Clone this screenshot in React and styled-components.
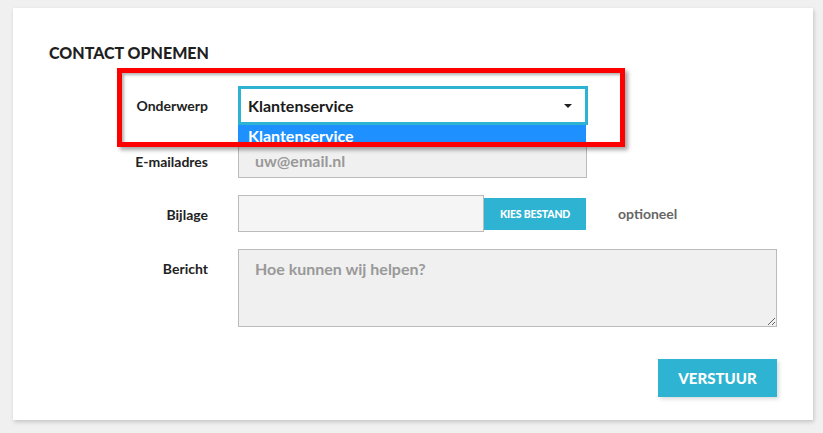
import React from "react";
import styled, { createGlobalStyle } from "styled-components";

const GlobalStyle = createGlobalStyle`
  * {
    box-sizing: border-box;
  }

  body {
    margin: 0;
    background: #f0f0f0;
    font-family: Lato, "Open Sans", sans-serif;
    color: #222;
  }
`;

const Page = styled.div`
  padding: 8px 10px 12px 13px;
`;

const Card = styled.section`
  position: relative;
  width: 800px;
  background: #ffffff;
  box-shadow: 1px 2px 4px rgba(0, 0, 0, 0.18);
  padding: 34px 36px 23px 36px;
`;

const Title = styled.h2`
  margin: 0 0 22px 0;
  font-size: 16px;
  line-height: 22px;
  font-weight: 900;
  color: #1f1f1f;
  text-transform: uppercase;
`;

const Form = styled.div`
  display: grid;
  grid-template-columns: 159px 1fr;
  column-gap: 30px;
  row-gap: 17px;
  align-items: start;
`;

const Label = styled.label`
  text-align: right;
  font-size: 14px;
  line-height: 18px;
  font-weight: 700;
  color: #222;
  padding-top: 11px;
`;

const SelectBox = styled.div`
  position: relative;
  width: 350px;
  height: 39px;
  border: 3px solid #2eb4d2;
  background: #ffffff;
  display: flex;
  align-items: center;
  justify-content: space-between;
  padding: 0 13px 0 7px;
  font-size: 16px;
  font-weight: 700;
  color: #1a1a1a;
  cursor: pointer;
`;

const Caret = styled.span`
  width: 0;
  height: 0;
  border-left: 4px solid transparent;
  border-right: 4px solid transparent;
  border-top: 4px solid #222;
`;

const Menu = styled.ul`
  position: absolute;
  top: calc(100% + 3px);
  left: -3px;
  width: 348px;
  margin: 0;
  padding: 0;
  list-style: none;
  z-index: 2;
`;

const Option = styled.li`
  height: 21px;
  line-height: 21px;
  padding-left: 10px;
  font-size: 16px;
  font-weight: 700;
  color: ${(p) => (p.$active ? "#ffffff" : "#222")};
  background: ${(p) => (p.$active ? "#1e90ff" : "#ffffff")};
`;

const TextInput = styled.input`
  display: block;
  width: ${(p) => p.$width}px;
  height: ${(p) => p.$height}px;
  border: 1px solid #bbbbbb;
  background: ${(p) => p.$bg || "#f0f0f0"};
  padding: 0 16px;
  font-family: inherit;
  font-size: 16px;
  font-weight: 700;
  color: #333;
  outline: none;

  &::placeholder {
    color: #999999;
  }
`;

const FileRow = styled.div`
  display: flex;
  align-items: center;
`;

const FileButton = styled.button`
  width: 102px;
  height: 32px;
  border: none;
  background: #2eb4d2;
  color: #ffffff;
  font-family: inherit;
  font-size: 10.5px;
  font-weight: 900;
  text-transform: uppercase;
  letter-spacing: -0.2px;
  cursor: pointer;
`;

const Hint = styled.span`
  margin-left: 32px;
  font-size: 14px;
  font-weight: 700;
  color: #666;
`;

const TextArea = styled.textarea`
  display: block;
  width: 539px;
  height: 78px;
  border: 1px solid #bbbbbb;
  background: #f0f0f0;
  padding: 9px 16px;
  font-family: inherit;
  font-size: 16px;
  line-height: 20px;
  font-weight: 700;
  color: #333;
  outline: none;

  &::placeholder {
    color: #999999;
  }
`;

const Actions = styled.div`
  display: flex;
  justify-content: flex-end;
  margin-top: 32px;
`;

const Submit = styled.button`
  width: 119px;
  height: 38px;
  border: none;
  background: #2eb4d2;
  color: #ffffff;
  font-family: inherit;
  font-size: 15px;
  font-weight: 900;
  text-transform: uppercase;
  box-shadow: 2px 2px 4px rgba(0, 0, 0, 0.15);
  cursor: pointer;
`;

const Highlight = styled.div`
  position: absolute;
  left: 104px;
  top: 60px;
  width: 508px;
  height: 79px;
  border: 5px solid #ff0000;
  box-shadow: 3px 3px 4px rgba(0, 0, 0, 0.35),
    inset 2px 2px 3px rgba(0, 0, 0, 0.3);
  pointer-events: none;
  z-index: 3;
`;

const App = () => {
  return (
    <Page>
      <GlobalStyle />
      <Card>
        <Title>Contact opnemen</Title>
        <Form>
          <Label>Onderwerp</Label>
          <SelectBox>
            <span>Klantenservice</span>
            <Caret />
            <Menu>
              <Option $active>Klantenservice</Option>
            </Menu>
          </SelectBox>

          <Label>E-mailadres</Label>
          <TextInput $width={349} $height={36} placeholder="uw@email.nl" />

          <Label>Bijlage</Label>
          <FileRow>
            <TextInput $width={246} $height={37} $bg="#f5f5f5" readOnly />
            <FileButton>Kies bestand</FileButton>
            <Hint>optioneel</Hint>
          </FileRow>

          <Label>Bericht</Label>
          <TextArea placeholder="Hoe kunnen wij helpen?" />
        </Form>
        <Actions>
          <Submit>Verstuur</Submit>
        </Actions>
        <Highlight />
      </Card>
    </Page>
  );
};

export default App;
